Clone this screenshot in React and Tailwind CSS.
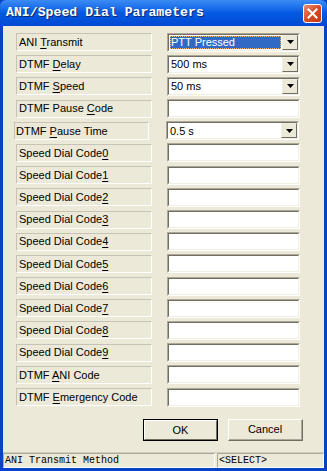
import { useState } from "react";

const rows = [
    { pre: 'ANI ', key: 'T', post: 'ransmit', kind: 'combo', value: 'PTT Pressed', selected: true },
    { pre: 'DTMF ', key: 'D', post: 'elay', kind: 'combo', value: '500 ms' },
    { pre: 'DTMF ', key: 'S', post: 'peed', kind: 'combo', value: '50 ms' },
    { pre: 'DTMF Pause ', key: 'C', post: 'ode', kind: 'edit' },
    { pre: 'DTMF ', key: 'P', post: 'ause Time', kind: 'combo', value: '0.5 s', wide: true },
    { pre: 'Speed Dial Code', key: '0', post: '', kind: 'edit' },
    { pre: 'Speed Dial Code', key: '1', post: '', kind: 'edit' },
    { pre: 'Speed Dial Code', key: '2', post: '', kind: 'edit' },
    { pre: 'Speed Dial Code', key: '3', post: '', kind: 'edit' },
    { pre: 'Speed Dial Code', key: '4', post: '', kind: 'edit' },
    { pre: 'Speed Dial Code', key: '5', post: '', kind: 'edit' },
    { pre: 'Speed Dial Code', key: '6', post: '', kind: 'edit' },
    { pre: 'Speed Dial Code', key: '7', post: '', kind: 'edit' },
    { pre: 'Speed Dial Code', key: '8', post: '', kind: 'edit' },
    { pre: 'Speed Dial Code', key: '9', post: '', kind: 'edit' },
    { pre: 'DTMF ', key: 'A', post: 'NI Code', kind: 'edit' },
    { pre: 'DTMF ', key: 'E', post: 'mergency Code', kind: 'edit' },
]

function Sunken({ children }) {
    // classic 3d sunken edge
    return (
        <div className="w-[133px] h-[19px] border-t border-l border-t-[#ACA899] border-l-[#ACA899] border-b border-r border-b-white border-r-white">
            <div className="w-full h-full border-t border-l border-t-[#716F64] border-l-[#716F64] border-b border-r border-b-[#F1EFE2] border-r-[#F1EFE2] bg-white flex items-stretch">
                {children}
            </div>
        </div>
    )
}

function Combo({ value, selected }) {
    return (
        <Sunken>
            <div className={`flex-1 flex items-center pl-[1px] m-[1px] ${selected ? 'bg-[#316AC5] text-white outline-1 outline-dotted outline-[#e0c070] -outline-offset-1' : 'text-black'}`}>
                {value}
            </div>
            <div className="w-[16px] h-full bg-[#ECE9D8] border-t border-l border-t-[#F1EFE2] border-l-[#F1EFE2] border-b border-r border-b-[#716F64] border-r-[#716F64] flex items-center justify-center">
                <svg width="7" height="4" viewBox="0 0 7 4"><path d="M0 0h7L3.5 4z" fill="#000" /></svg>
            </div>
        </Sunken>
    )
}

function App() {
    const [sel] = useState(0);

    return (
        <div className="w-[327px] h-[471px] bg-[#0842C5] flex flex-col overflow-hidden" style={{ fontFamily: '"Liberation Sans", Arial, sans-serif' }}>
            {/* title bar */}
            <div className="h-[26px] shrink-0 flex items-center justify-between pl-[6px] pr-[5px] rounded-t-[6px] bg-gradient-to-b from-[#3B8CF5] via-[#0259E3] to-[#0349D2]">
                <span className="text-white font-bold text-[13.2px] leading-none" style={{ fontFamily: '"Liberation Mono", monospace', textShadow: '1px 1px 0 #0a246a' }}>ANI/Speed Dial Parameters</span>
                <div className="w-[19px] h-[19px] rounded-[3px] border border-white bg-gradient-to-br from-[#E98A6F] via-[#D94A24] to-[#C13A16] flex items-center justify-center">
                    <svg width="11" height="11" viewBox="0 0 11 11"><path d="M1.5 1.5l8 8M9.5 1.5l-8 8" stroke="#fff" strokeWidth="2" strokeLinecap="square" /></svg>
                </div>
            </div>

            <div className="flex-1 mx-[3px] bg-[#ECE9D8] flex flex-col">
                <div className="pt-[7px] pl-[13px] flex flex-col gap-[4.2px] text-[11px] text-black">
                    {rows.map((r, i) => (
                        <div key={i} className="flex items-center h-[18px]">
                            <div className={`h-[18px] flex items-center border-t border-l border-t-[#C6C3B4] border-l-[#C6C3B4] border-b border-r border-b-white border-r-white ${r.wide ? 'w-[135px] -ml-[2px] mr-[17px] pl-[1px]' : 'w-[136px] mr-[15px] pl-[2px]'}`}>
                                <span className="whitespace-nowrap">{r.pre}<span className="underline underline-offset-2">{r.key}</span>{r.post}</span>
                            </div>
                            {r.kind === 'combo'
                                ? <Combo value={r.value} selected={r.selected && sel === 0} />
                                : <Sunken />}
                        </div>
                    ))}
                </div>

                <div className="flex justify-end gap-[10px] pr-[21px] mt-[13px] text-[11px]">
                    <button className="w-[75px] h-[22px] border border-[#000] bg-[#ECE9D8]">
                        <div className="w-full h-full border-t border-l border-t-white border-l-white border-b border-r border-b-[#716F64] border-r-[#716F64] flex items-center justify-center">OK</div>
                    </button>
                    <button className="w-[75px] h-[22px] border-t border-l border-t-white border-l-white border-b border-r border-b-[#716F64] border-r-[#716F64] bg-[#ECE9D8]">
                        <div className="w-full h-full border-b border-r border-b-[#ACA899] border-r-[#ACA899] flex items-center justify-center">Cancel</div>
                    </button>
                </div>

                <div className="mt-auto h-[16px] border-t border-t-[#D0CDBE] flex gap-[2px] text-[10px]" style={{ fontFamily: '"Liberation Mono", monospace' }}>
                    <div className="w-[212px] h-full border-t border-l border-t-[#ACA899] border-l-[#ACA899] border-b border-r border-b-white border-r-white flex items-center pl-[1px] whitespace-nowrap">ANI Transmit Method</div>
                    <div className="flex-1 h-full border-t border-l border-t-[#ACA899] border-l-[#ACA899] border-b border-r border-b-white border-r-white flex items-center pl-[1px]">&lt;SELECT&gt;</div>
                </div>
            </div>
            <div className="h-[3px] shrink-0"></div>
        </div>
    )
}

export default App
